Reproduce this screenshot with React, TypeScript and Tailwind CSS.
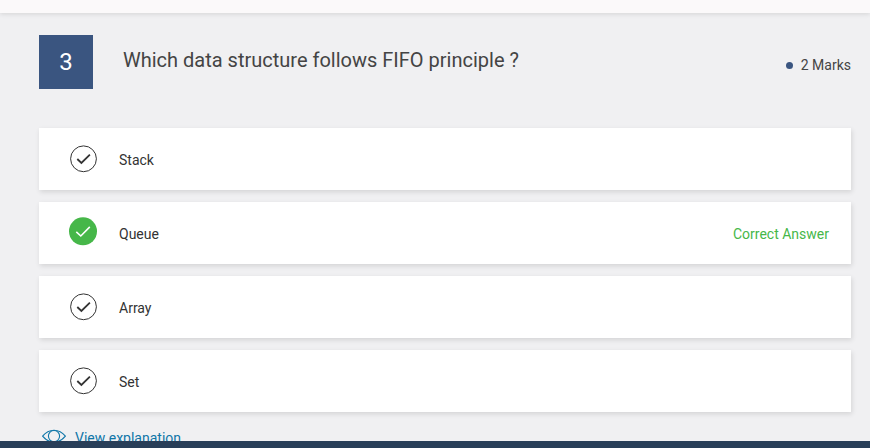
const OPTIONS = [
  { label: "Stack", correct: false },
  { label: "Queue", correct: true },
  { label: "Array", correct: false },
  { label: "Set", correct: false },
];

function OptionIcon({ correct }: { correct: boolean }) {
  if (correct) {
    return (
      <svg className="mb-[2px] block h-[30px] w-[30px]" viewBox="0 0 30 30" fill="none">
        <circle cx="15" cy="14.3" r="14" fill="#46b749" />
        <path d="M8.3 14.8 L12.8 19 L21.8 9.9" stroke="#fff" strokeWidth="1.6" />
      </svg>
    );
  }
  return (
    <svg className="mb-[2px] block h-[30px] w-[30px]" viewBox="0 0 30 30" fill="none" stroke="#333">
      <circle cx="15.5" cy="15.8" r="12.9" strokeWidth="1" />
      <path d="M9.3 16 L13.4 20 L21.9 11.6" strokeWidth="1.8" />
    </svg>
  );
}

function OptionCard({ label, correct }: { label: string; correct: boolean }) {
  return (
    <li className="flex h-[62px] items-center bg-white pr-[22px] pl-[29px] shadow-[1px_2px_5px_rgba(0,0,0,0.12)]">
      <OptionIcon correct={correct} />
      <span className="ml-[21px] pt-[2px] text-sm text-[#333]">{label}</span>
      {correct && <span className="ml-auto pt-[2px] text-sm text-[#46b749]">Correct Answer</span>}
    </li>
  );
}

export default function App() {
  return (
    <div className="flex h-[448px] w-[870px] flex-col overflow-hidden bg-[#f0f0f2] font-['Roboto',sans-serif]">
      <header className="z-10 h-[13px] shrink-0 bg-[#fbf9fa] shadow-[0_1px_5px_rgba(0,0,0,0.12)]" />
      <main className="min-h-0 flex-1 overflow-hidden pt-[22px] pr-[19px] pl-[39px]">
        <div className="flex h-[54px]">
          <div className="flex w-[54px] items-center justify-center bg-[#3a5580] text-2xl text-white">3</div>
          <h1 className="ml-[30px] pt-[11px] text-xl leading-7 text-[#444]">
            Which data structure follows FIFO principle ?
          </h1>
          <div className="mt-[20px] ml-auto flex h-5 items-center self-start text-sm text-[#444]">
            <span className="mr-2 h-[7px] w-[7px] rounded-full bg-[#3a5580]" />
            2 Marks
          </div>
        </div>
        <ul className="mt-[39px] flex flex-col gap-3">
          {OPTIONS.map((option) => (
            <OptionCard key={option.label} {...option} />
          ))}
        </ul>
        <a className="mt-4 flex items-start pl-[3px] text-sm text-[#0f76a8]">
          <svg className="mt-[1px] h-4 w-6 shrink-0" viewBox="0 0 24 16" fill="none" stroke="currentColor" strokeWidth="1.1">
            <path d="M0.6 7.2 C7 -0.7 17 -0.7 23.4 7.2 C17 15.1 7 15.1 0.6 7.2 Z" />
            <circle cx="12" cy="7.1" r="5.6" />
          </svg>
          <span className="ml-[9px] leading-5">View explanation</span>
        </a>
      </main>
      <footer className="h-[7px] shrink-0 bg-[#283e58]" />
    </div>
  );
}
